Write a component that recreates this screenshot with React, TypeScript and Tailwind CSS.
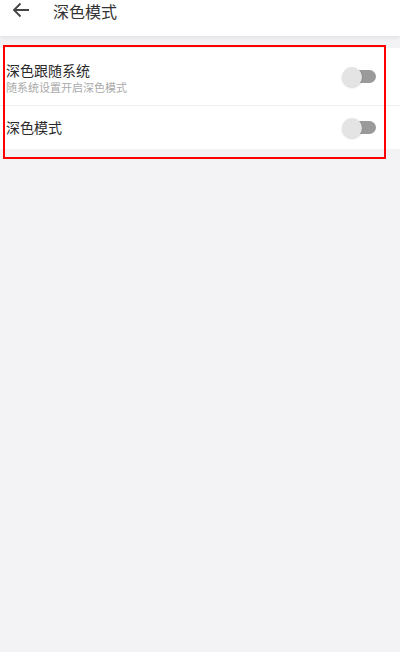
import React, { useState } from "react";

const font = { fontFamily: '"Noto Sans CJK SC", "Noto Sans", sans-serif' };

const Toggle: React.FC<{ on: boolean; onChange: () => void }> = ({ on, onChange }) => (
  <button onClick={onChange} className="relative w-[34px] h-[20px] flex items-center">
    <span className="absolute right-0 w-[24px] h-[13px] rounded-full bg-[#9a9a9a]" />
    <span
      className={
        "absolute w-[20px] h-[20px] rounded-full bg-[#e4e4e4] shadow-[0_1px_2px_rgba(0,0,0,0.18)] " +
        (on ? "right-0" : "left-0")
      }
    />
  </button>
);

export default function App() {
  const [followSystem, setFollowSystem] = useState(false);
  const [dark, setDark] = useState(false);

  return (
    <div className="w-full min-h-[652px] bg-[#f3f3f5]" style={font}>
      <div className="h-[36px] bg-white flex items-start shadow-[0_2px_4px_rgba(0,0,0,0.07)]">
        <svg width="18" height="16" viewBox="0 0 18 16" className="ml-[12px] mt-[2px]">
          <path d="M17 8H2M8.5 1.5L2 8l6.5 6.5" fill="none" stroke="#444" strokeWidth="1.8" />
        </svg>
        <span className="ml-[23px] text-[16px] leading-[22px] text-[#333]">深色模式</span>
      </div>

      <div className="relative mt-[12px]">
        <div className="bg-white">
          <div className="h-[57px] flex items-center justify-between pl-[6px] pr-[24px]">
            <div className="flex flex-col">
              <span className="text-[14px] leading-[18px] text-[#2a2a2a] mt-[2px]">深色跟随系统</span>
              <span className="text-[11px] leading-[16px] text-[#aaaaaa]">
                随系统设置开启深色模式
              </span>
            </div>
            <Toggle on={followSystem} onChange={() => setFollowSystem(!followSystem)} />
          </div>
          <div className="h-px bg-[#efefef]" />
          <div className="h-[43px] flex items-center justify-between pl-[6px] pr-[24px]">
            <span className="text-[14px] text-[#2a2a2a]">深色模式</span>
            <Toggle on={dark} onChange={() => setDark(!dark)} />
          </div>
        </div>
        <div className="absolute left-[3px] right-[14px] -top-[3px] -bottom-[10px] border-2 border-[#ff0000] pointer-events-none" />
      </div>
    </div>
  );
}
